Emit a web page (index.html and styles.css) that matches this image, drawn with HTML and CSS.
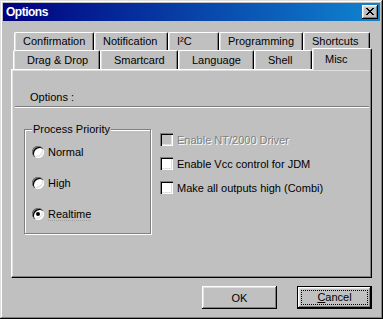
FILE: index.html
```html
<!DOCTYPE html>
<html lang="en">
<head>
  <meta charset="UTF-8">
  <title>Options</title>
  <link rel="stylesheet" href="styles.css">
</head>
<body>
  <div class="window">
    <div class="titlebar">
      <span class="title">Options</span>
      <button class="close-btn" aria-label="Close">
        <svg width="8" height="7" viewBox="0 0 8 7" shape-rendering="crispEdges">
          <path fill="#000" d="M0 0h2v1h-2z M6 0h2v1h-2z M1 1h2v1h-2z M5 1h2v1h-2z M2 2h4v1h-4z M3 3h2v1h-2z M2 4h4v1h-4z M1 5h2v1h-2z M5 5h2v1h-2z M0 6h2v1h-2z M6 6h2v1h-2z"/>
        </svg>
      </button>
    </div>

    <div class="tabs">
      <div class="tab-row tab-row-back">
        <div class="tab tab-confirm">Confirmation</div>
        <div class="tab tab-notify">Notification</div>
        <div class="tab tab-i2c">I²C</div>
        <div class="tab tab-prog">Programming</div>
        <div class="tab tab-short">Shortcuts</div>
      </div>
      <div class="tab-row tab-row-front">
        <div class="tab tab-drag">Drag &amp; Drop</div>
        <div class="tab tab-smart">Smartcard</div>
        <div class="tab tab-lang">Language</div>
        <div class="tab tab-shell">Shell</div>
        <div class="tab tab-misc active">Misc</div>
      </div>
    </div>

    <div class="panel">
      <div class="panel-head"><span>Options :</span></div>
      <div class="panel-body">
        <div class="group">
          <span class="group-label">Process Priority</span>
          <div class="radio-list">
            <label class="radio-row"><span class="radio"></span>Normal</label>
            <label class="radio-row"><span class="radio"></span>High</label>
            <label class="radio-row"><span class="radio checked"></span><span class="focused">Realtime</span></label>
          </div>
        </div>
        <div class="checks">
          <label class="check-row disabled"><span class="checkbox"></span>Enable NT/2000 Driver</label>
          <label class="check-row"><span class="checkbox"></span>Enable Vcc control for JDM</label>
          <label class="check-row"><span class="checkbox"></span>Make all outputs high (Combi)</label>
        </div>
      </div>
    </div>

    <div class="buttons">
      <button class="btn">OK</button>
      <button class="btn btn-default"><span class="focus-rect"><u>C</u>ancel</span></button>
    </div>
  </div>
</body>
</html>
```

FILE: styles.css
```css
body {
  margin: 0;
  background: #c0c0c0;
  font-family: "Liberation Sans", Arial, sans-serif;
  font-size: 11px;
  color: #000;
}
.window {
  width: 383px;
  height: 319px;
  box-sizing: border-box;
  padding: 3px;
  background: #c0c0c0;
  box-shadow: inset -1px -1px #000, inset 1px 1px #dfdfdf, inset -2px -2px #808080, inset 2px 2px #fff;
  display: flex;
  flex-direction: column;
}
.titlebar {
  height: 18px;
  display: flex;
  align-items: center;
  padding-left: 3px;
  background: linear-gradient(to right, #000080, #1084d0);
}
.title {
  color: #fff;
  font-weight: bold;
  font-size: 12px;
  letter-spacing: -0.5px;
}
.close-btn {
  margin-left: auto;
  margin-right: 2px;
  width: 16px;
  height: 14px;
  padding: 0;
  border: 0;
  background: #c0c0c0;
  box-shadow: inset -1px -1px #000, inset 1px 1px #fff, inset -2px -2px #808080, inset 2px 2px #dfdfdf;
  display: flex;
  align-items: center;
  justify-content: center;
}
.close-btn svg {
  display: block;
  margin-top: -1px;
}

/* tabs */
.tabs {
  margin: 11px 0 0 8px;
}
.tab-row {
  display: flex;
  align-items: flex-start;
}
.tab-row-back {
  padding-left: 3px;
  height: 18px;
}
.tab-row-front {
  padding-left: 2px;
  height: 19px;
}
.tab {
  box-sizing: border-box;
  flex: none;
  text-align: left;
  background: #c0c0c0;
  border-top: 1px solid #fff;
  border-left: 1px solid #fff;
  border-right: 1px solid #000;
  border-radius: 2px 2px 0 0;
  box-shadow: inset -1px 0 #808080, inset 1px 0 #dfdfdf;
  line-height: 17px;
  white-space: nowrap;
}
.tab-row-back .tab {
  height: 18px;
  padding-left: 8px;
}
.tab-row-front .tab {
  height: 19px;
  padding: 1px 0 0 13px;
}
.tab-confirm { width: 80px; }
.tab-notify { width: 74px; }
.tab-i2c { width: 51px; }
.tab-prog { width: 84px; }
.tab-short { width: 67px; }
.tab-drag { width: 87px; }
.tab-smart { width: 78px; }
.tab-lang { width: 76px; }
.tab-shell { width: 58px; }
.tab-misc { width: 60px; }
.tab-row-front .tab.active {
  position: relative;
  z-index: 1;
  height: 22px;
  margin-top: -2px;
  padding: 2px 0 0 12px;
}

/* panel */
.panel {
  margin-left: 8px;
  width: 361px;
  height: 209px;
  box-sizing: border-box;
  border: 1px solid;
  border-color: #fff #000 #000 #fff;
  box-shadow: inset -1px -1px #808080, inset 1px 1px #dfdfdf;
}
.panel-head {
  margin: 0 2px 0 3px;
  padding: 21px 0 2px 15px;
  line-height: 13px;
  border-bottom: 1px solid #808080;
  box-shadow: 0 1px #fff;
}
.panel-body {
  display: flex;
  align-items: flex-start;
  padding: 22px 0 0 12px;
}
.group {
  width: 127px;
  height: 105px;
  box-sizing: border-box;
  border: 1px solid #808080;
  box-shadow: inset 1px 1px #fff, 1px 1px #fff;
}
.group-label {
  display: block;
  width: max-content;
  margin: -7px 0 0 7px;
  padding: 0 1px;
  line-height: 13px;
  background: #c0c0c0;
}
.radio-list {
  display: flex;
  flex-direction: column;
  gap: 19px;
  margin: 10px 0 0 7px;
}
.radio-row {
  display: flex;
  align-items: center;
  gap: 4px;
  height: 12px;
  line-height: 13px;
}
.radio {
  width: 12px;
  height: 12px;
  border-radius: 50%;
  background: #fff;
  box-shadow: inset 1px 1px #808080, inset 2px 2px #000, inset -1px -1px #fff, inset -2px -2px #dfdfdf;
  display: flex;
  align-items: center;
  justify-content: center;
}
.radio.checked::after {
  content: "";
  width: 4px;
  height: 4px;
  border-radius: 50%;
  background: #000;
}
.focused {
  border-bottom: 1px dotted #a0a0a0;
  line-height: 12px;
}
.checks {
  display: flex;
  flex-direction: column;
  gap: 11px;
  margin: 4px 0 0 9px;
}
.check-row {
  display: flex;
  align-items: center;
  gap: 4px;
  height: 13px;
  white-space: nowrap;
}
.checkbox {
  width: 13px;
  height: 13px;
  background: #fff;
  box-shadow: inset 1px 1px #808080, inset 2px 2px #000, inset -1px -1px #fff, inset -2px -2px #dfdfdf;
}
.check-row.disabled {
  color: #808080;
  text-shadow: 1px 1px #fff;
}
.check-row.disabled .checkbox {
  background: #c0c0c0;
}

/* buttons */
.buttons {
  display: flex;
  justify-content: flex-end;
  gap: 20px;
  margin-top: 8px;
  padding-right: 8px;
}
.btn {
  width: 75px;
  height: 23px;
  padding: 0;
  border: 0;
  background: #c0c0c0;
  font: inherit;
  color: #000;
  box-shadow: inset -1px -1px #000, inset 1px 1px #fff, inset -2px -2px #808080, inset 2px 2px #dfdfdf;
}
.btn-default {
  display: flex;
  box-shadow: inset 0 0 0 1px #000, inset -2px -2px #000, inset 2px 2px #fff, inset -3px -3px #808080, inset 3px 3px #dfdfdf;
}
.focus-rect {
  flex: 1;
  margin: 4px;
  border: 1px dotted #000;
  line-height: 13px;
  text-align: center;
}
```
